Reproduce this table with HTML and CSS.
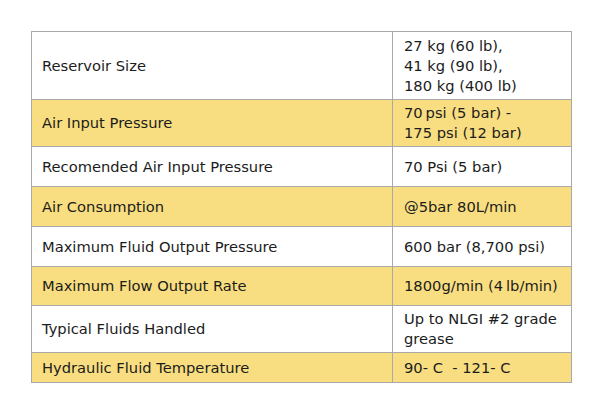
FILE: index.html
```html
<!DOCTYPE html>
<html>
<head>
<meta charset="utf-8">
<link rel="stylesheet" href="styles.css">
</head>
<body>
<table class="spec">
  <colgroup><col class="c-label"><col class="c-value"></colgroup>
  <tr class="row h68"><td>Reservoir Size</td><td>27 kg (60 lb),<br>41 kg (90 lb),<br>180 kg (400 lb)</td></tr>
  <tr class="row alt h47"><td>Air Input Pressure</td><td>70&thinsp;psi (5 bar) -<br>175 psi (12 bar)</td></tr>
  <tr class="row h39"><td>Recomended Air Input Pressure</td><td>70 Psi (5 bar)</td></tr>
  <tr class="row alt h39"><td>Air Consumption</td><td>@5bar 80L/min</td></tr>
  <tr class="row h39"><td>Maximum Fluid Output Pressure</td><td>600 bar (8,700 psi)</td></tr>
  <tr class="row alt h40"><td>Maximum Flow Output Rate</td><td>1800g/min (4&thinsp;lb/min)</td></tr>
  <tr class="row h48"><td>Typical Fluids Handled</td><td>Up to NLGI #2 grade<br>grease</td></tr>
  <tr class="row alt h30"><td>Hydraulic Fluid Temperature</td><td>90- C&nbsp; - 121- C</td></tr>
</table>
</body>
</html>
```

FILE: styles.css
```css
html, body {
  margin: 0;
  padding: 0;
  background: #ffffff;
}
body {
  padding: 31px 0 0 31px;
  font-family: "DejaVu Sans", "Liberation Sans", sans-serif;
  font-size: 14.7px;
  color: #1c1c1c;
}
.spec {
  border-collapse: collapse;
  width: 540px;
  table-layout: fixed;
}
.c-label { width: 361px; }
.c-value { width: 179px; }
.spec td {
  border: 1px solid #a9a9a9;
  padding: 0 10px;
  line-height: 20px;
  vertical-align: middle;
  white-space: nowrap;
}
.spec td + td { padding-left: 11px; }
.alt td { background: #f8de80; }
.h68 { height: 68px; }
.h47 { height: 47px; }
.h39 { height: 40px; }
.h40 { height: 39px; }
.h48 { height: 47px; }
.h30 { height: 30px; }
```
